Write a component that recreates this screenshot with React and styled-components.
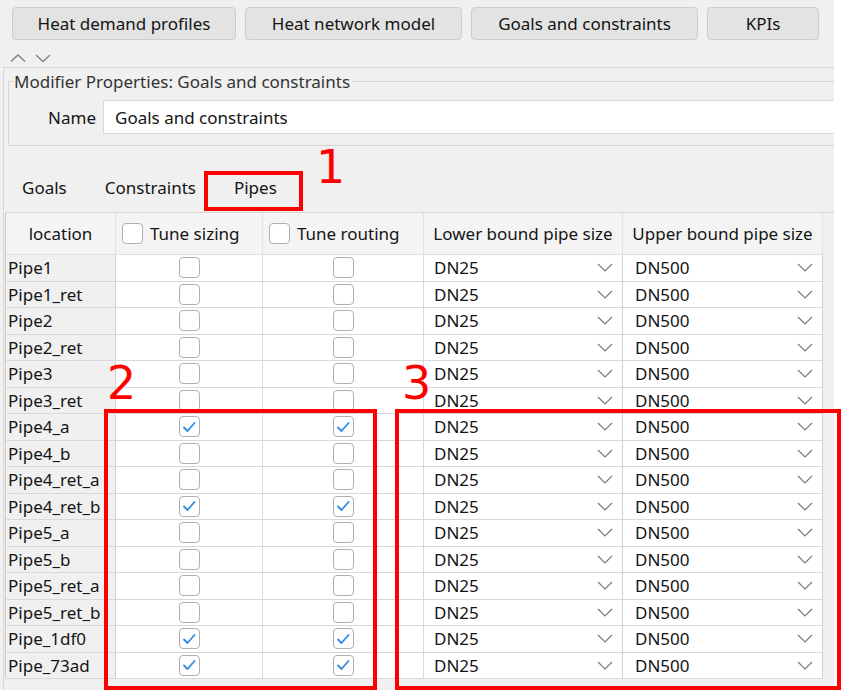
import React from 'react';
import styled, { createGlobalStyle } from 'styled-components';

const GlobalStyle = createGlobalStyle`
  html, body {
    margin: 0;
    padding: 0;
    background: #ffffff;
  }
  body {
    font-family: "Noto Sans", "Open Sans", sans-serif;
  }
`;

const rows = [
  { name: 'Pipe1', on: false },
  { name: 'Pipe1_ret', on: false },
  { name: 'Pipe2', on: false },
  { name: 'Pipe2_ret', on: false },
  { name: 'Pipe3', on: false },
  { name: 'Pipe3_ret', on: false },
  { name: 'Pipe4_a', on: true },
  { name: 'Pipe4_b', on: false },
  { name: 'Pipe4_ret_a', on: false },
  { name: 'Pipe4_ret_b', on: true },
  { name: 'Pipe5_a', on: false },
  { name: 'Pipe5_b', on: false },
  { name: 'Pipe5_ret_a', on: false },
  { name: 'Pipe5_ret_b', on: false },
  { name: 'Pipe_1df0', on: true },
  { name: 'Pipe_73ad', on: true },
];

const CheckBox = ({ checked }) => (
  <Box>
    {checked && (
      <svg width="14" height="12" viewBox="0 0 14 12">
        <polyline points="2,6.5 5.5,10 12.5,2" fill="none" stroke="#2f8ae6" strokeWidth="1.8" strokeLinecap="round" strokeLinejoin="round" />
      </svg>
    )}
  </Box>
);

const Chevron = () => (
  <svg width="16" height="9" viewBox="0 0 16 9">
    <polyline points="1,1 8,8 15,1" fill="none" stroke="#7a7a7a" strokeWidth="1.2" />
  </svg>
);

const App = () => {
  return (
    <Page>
      <GlobalStyle />
      <Screen>
        <Toolbar>
          <ToolButton w={224}>Heat demand profiles</ToolButton>
          <ToolButton w={217}>Heat network model</ToolButton>
          <ToolButton w={227}>Goals and constraints</ToolButton>
          <ToolButton w={112}>KPIs</ToolButton>
        </Toolbar>
        <Arrows>
          <svg width="42" height="10" viewBox="0 0 42 10">
            <polyline points="1,8.5 8,2 15,8.5" fill="none" stroke="#808080" strokeWidth="1.3" />
            <polyline points="26,2 33,8.5 40,2" fill="none" stroke="#808080" strokeWidth="1.3" />
          </svg>
        </Arrows>
        <Panel>
          <Group>
            <Legend>Modifier Properties: Goals and constraints</Legend>
            <NameRow>
              <NameLabel>Name</NameLabel>
              <NameInput>Goals and constraints</NameInput>
            </NameRow>
          </Group>
          <Tabs>
            <Tab x={17}>Goals</Tab>
            <Tab x={38}>Constraints</Tab>
            <Tab x={38} active>Pipes</Tab>
          </Tabs>
          <Table>
            <HeadCell center>location</HeadCell>
            <HeadCell>
              <CheckBox />
              Tune sizing
            </HeadCell>
            <HeadCell>
              <CheckBox />
              Tune routing
            </HeadCell>
            <HeadCell center>Lower bound pipe size</HeadCell>
            <HeadCell center>Upper bound pipe size</HeadCell>
            <Filler />
            {rows.map((r) => (
              <React.Fragment key={r.name}>
                <RowHead>{r.name}</RowHead>
                <CheckCell><CheckBox checked={r.on} /></CheckCell>
                <CheckCell><CheckBox checked={r.on} /></CheckCell>
                <SelectCell pad={10}>DN25<Chevron /></SelectCell>
                <SelectCell pad={12}>DN500<Chevron /></SelectCell>
                <Filler />
              </React.Fragment>
            ))}
          </Table>
        </Panel>
      </Screen>

      <Mark style={{ left: 204, top: 171, width: 99, height: 40 }} />
      <Num style={{ left: 316, top: 140 }}>1</Num>
      <Mark style={{ left: 104, top: 409, width: 273, height: 281 }} />
      <Num style={{ left: 107, top: 356 }}>2</Num>
      <Mark style={{ left: 395, top: 409, width: 446, height: 281 }} />
      <Num style={{ left: 402, top: 356 }}>3</Num>
    </Page>
  );
};

export default App;

const Page = styled.div`
  position: relative;
  width: 843px;
  height: 690px;
  overflow: hidden;
  background: #ffffff;
  color: #141414;
  font-size: 17px;
`;

const Screen = styled.div`
  width: 834px;
  height: 690px;
  overflow: hidden;
  background: #f0f0f0;
`;

const Toolbar = styled.div`
  display: flex;
  gap: 9px;
  padding: 7px 0 0 12px;
`;

const ToolButton = styled.div`
  width: ${(p) => p.w}px;
  height: 33px;
  box-sizing: border-box;
  display: flex;
  align-items: center;
  justify-content: center;
  background: #e3e3e3;
  border: 1px solid #cdcdcd;
  border-radius: 4px;
  font-size: 17px;
`;

const Arrows = styled.div`
  height: 12px;
  margin-top: 12px;
  padding-left: 10px;
  display: flex;
  align-items: center;
`;

const Panel = styled.div`
  margin: 3px 0 0 3px;
  border-top: 1px solid #d6d6d6;
  border-left: 1px solid #d6d6d6;
  height: 640px;
`;

const Group = styled.fieldset`
  margin: 2px -30px 0 4px;
  padding: 7px 0 11px 0;
  border: 1px solid #d6d6d6;
`;

const Legend = styled.legend`
  padding: 0 2px 0 0;
  margin-left: 5px;
  font-size: 17px;
  color: #333333;
`;

const NameRow = styled.div`
  display: flex;
  align-items: center;
  gap: 7px;
`;

const NameLabel = styled.span`
  width: 87px;
  text-align: right;
`;

const NameInput = styled.div`
  flex: 1;
  height: 34px;
  box-sizing: border-box;
  background: #ffffff;
  border: 1px solid #d9d9d9;
  display: flex;
  align-items: center;
  padding-left: 11px;
`;

const Tabs = styled.div`
  display: flex;
  height: 67px;
  align-items: center;
  padding-top: 17px;
  box-sizing: border-box;
  border-bottom: 1px solid #d6d6d6;
  margin-left: 1px;
`;

const Tab = styled.div`
  margin-left: ${(p) => p.x}px;
`;

const Table = styled.div`
  display: grid;
  grid-template-columns: 110px 147px 161px 199px 200px 12px;
  grid-template-rows: 42px;
  grid-auto-rows: 26.5px;
  margin-left: 1px;
  border-left: 1px solid #c9c9c9;
  background: #f0f0f0;
`;

const HeadCell = styled.div`
  display: flex;
  align-items: center;
  justify-content: ${(p) => (p.center ? 'center' : 'flex-start')};
  gap: 7px;
  padding-left: ${(p) => (p.center ? 0 : 6)}px;
  background: #f4f4f4;
  border-right: 1px solid #e3e3e3;
  border-bottom: 1px solid #e0e0e0;
  white-space: nowrap;
  overflow: hidden;
`;

const Filler = styled.div`
  background: #f0f0f0;
`;

const RowHead = styled.div`
  display: flex;
  align-items: center;
  padding-left: 2px;
  background: #f0f0f0;
  border-right: 1px solid #d2d2d2;
  border-bottom: 1px solid #d9d9d9;
  white-space: nowrap;
  overflow: hidden;
`;

const CheckCell = styled.div`
  display: flex;
  align-items: center;
  justify-content: center;
  background: #ffffff;
  border-right: 1px solid #d9d9d9;
  border-bottom: 1px solid #d9d9d9;
`;

const SelectCell = styled.div`
  display: flex;
  align-items: center;
  justify-content: space-between;
  padding: 0 9px 0 ${(p) => p.pad}px;
  background: #ffffff;
  border-right: 1px solid #d2d2d2;
  border-bottom: 1px solid #d9d9d9;
`;

const Box = styled.div`
  width: 21px;
  height: 21px;
  box-sizing: border-box;
  flex: none;
  border: 1.5px solid #b0b0b0;
  border-radius: 4px;
  background: #ffffff;
  display: flex;
  align-items: center;
  justify-content: center;
`;

const Mark = styled.div`
  position: absolute;
  box-sizing: border-box;
  border: 4.5px solid #ff0000;
`;

const Num = styled.div`
  position: absolute;
  font-family: "DejaVu Sans", sans-serif;
  font-size: 46px;
  line-height: 1.2;
  color: #ff0000;
`;
